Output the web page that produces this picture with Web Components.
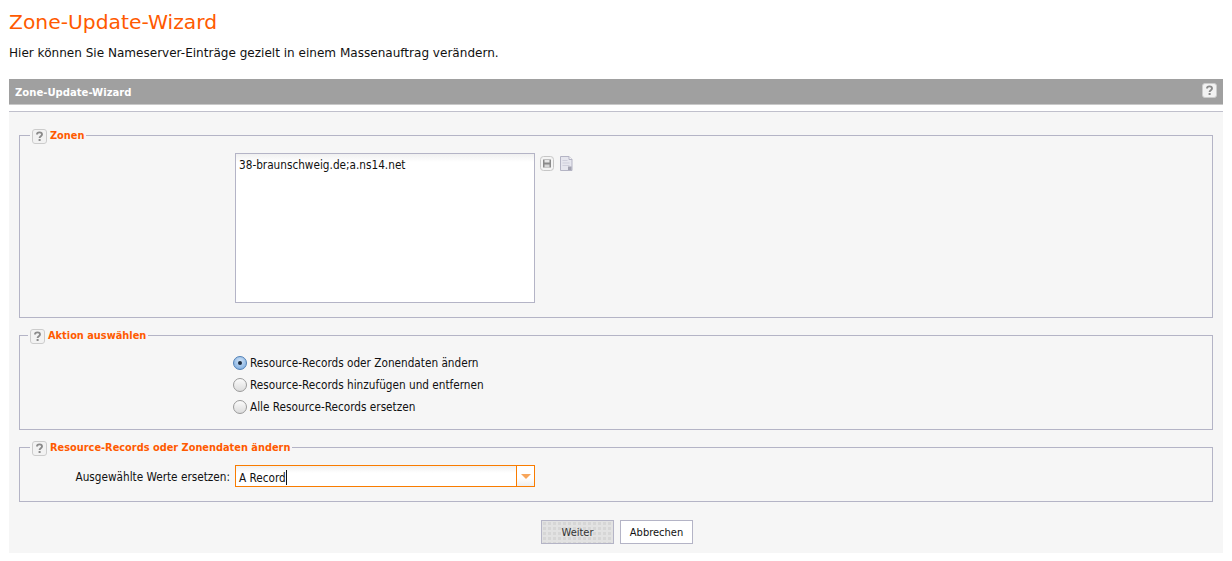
<!DOCTYPE html>
<html lang="de">
<head>
<meta charset="utf-8">
<title>Zone-Update-Wizard</title>
<style>
  html, body { margin: 0; background: #fff; }
  body { padding: 0 9px; font-family: "DejaVu Sans Condensed", "DejaVu Sans", sans-serif; font-size: 11.7px; color: #111; }
</style>
</head>
<body>
<wizard-page>
  <wizard-panel heading="Zone-Update-Wizard">
    <wizard-group heading="Zonen" style="height:183px;margin-top:23px">
      <form-row>
        <zone-text>38-braunschweig.de;a.ns14.net</zone-text>
      </form-row>
    </wizard-group>
    <wizard-group heading="Aktion auswählen" shift="-2" style="height:95px;margin-top:17px">
      <form-row style="padding-top:16px">
        <radio-option checked>Resource-Records oder Zonendaten ändern</radio-option>
        <radio-option>Resource-Records hinzufügen und entfernen</radio-option>
        <radio-option>Alle Resource-Records ersetzen</radio-option>
      </form-row>
    </wizard-group>
    <wizard-group heading="Resource-Records oder Zonendaten ändern" style="height:55px;margin-top:17px">
      <form-row label="Ausgewählte Werte ersetzen:" style="padding-top:17px">
        <combo-box value="A Record"></combo-box>
      </form-row>
    </wizard-group>
    <button-bar>
      <wizard-button disabled>Weiter</wizard-button>
      <wizard-button>Abbrechen</wizard-button>
    </button-bar>
  </wizard-panel>
</wizard-page>

<script>
// little grey question mark box, used in the panel bar and the legends
class HelpIcon extends HTMLElement {
  constructor() {
    super();
    this.attachShadow({ mode: 'open' });
  }
  connectedCallback() {
    this.shadowRoot.innerHTML = `
      <style>
        :host { display: inline-block; width: 15px; height: 15px; }
        svg { display: block; }
      </style>
      <svg width="15" height="15" viewBox="0 0 15 15" aria-hidden="true">
        <rect x=".5" y=".5" width="14" height="14" rx="2.5" fill="#f2f2f2" stroke="#cccccc"/>
        <path d="M5 5.6C5 4.2 6.1 3.4 7.5 3.4S10 4.3 10 5.5C10 7.2 7.6 7.2 7.6 9" fill="none" stroke="#8a8a8a" stroke-width="1.9"/>
        <rect x="6.6" y="10" width="2" height="2" fill="#8a8a8a"/>
      </svg>`;
  }
}

class WizardPage extends HTMLElement {
  constructor() {
    super();
    this.attachShadow({ mode: 'open' });
  }
  connectedCallback() {
    this.shadowRoot.innerHTML = `
      <style>
        :host { display: block; }
        h1 {
          margin: 0;
          padding-top: 10px;
          font: normal 20.3px/24px "DejaVu Sans", sans-serif;
          color: #ff5a00;
        }
        p {
          margin: 0 0 18px;
          padding-top: 11px;
          font: 12.05px/16px "DejaVu Sans", sans-serif;
          color: #111;
        }
      </style>
      <h1>Zone-Update-Wizard</h1>
      <p>Hier können Sie Nameserver-Einträge gezielt in einem Massenauftrag verändern.</p>
      <slot></slot>`;
  }
}

class WizardPanel extends HTMLElement {
  constructor() {
    super();
    this.attachShadow({ mode: 'open' });
  }
  connectedCallback() {
    this.shadowRoot.innerHTML = `
      <style>
        :host { display: block; }
        .bar {
          display: flex;
          align-items: center;
          justify-content: space-between;
          box-sizing: border-box;
          height: 25px;
          padding: 1px 6px 0;
          background: #a0a0a0;
          color: #fff;
          font: bold 11.2px "DejaVu Sans Condensed", sans-serif;
        }
        help-icon { margin-top: -4px; }
        .gap { box-sizing: border-box; height: 8px; border-top: 1px solid #c9c9c9; border-bottom: 1px solid #c0c0cc; }
        .body { background: #f6f6f6; padding: 0 10px; height: 441px; box-sizing: border-box; overflow: hidden; }
      </style>
      <div class="bar"><span>${this.getAttribute('heading')}</span><help-icon></help-icon></div>
      <div class="gap"></div>
      <div class="body"><slot></slot></div>`;
  }
}

class WizardGroup extends HTMLElement {
  constructor() {
    super();
    this.attachShadow({ mode: 'open' });
  }
  connectedCallback() {
    const shift = 12 + Number(this.getAttribute('shift') || 0);
    this.shadowRoot.innerHTML = `
      <style>
        :host { display: block; box-sizing: border-box; position: relative; border: 1px solid #b4b4c6; }
        .legend {
          position: absolute;
          top: -8px;
          left: ${shift - 2}px;
          display: flex;
          align-items: center;
          gap: 3px;
          padding: 0 2px;
          background: #f6f6f6;
          color: #ff5a00;
          font: bold 10.9px/16px "DejaVu Sans Condensed", sans-serif;
        }
      </style>
      <div class="legend"><help-icon></help-icon><span>${this.getAttribute('heading')}</span></div>
      <slot></slot>`;
  }
}

// label column on the left, the controls start at the same x in every group
class FormRow extends HTMLElement {
  constructor() {
    super();
    this.attachShadow({ mode: 'open' });
  }
  connectedCallback() {
    const label = this.getAttribute('label') || '';
    this.shadowRoot.innerHTML = `
      <style>
        :host { display: grid; grid-template-columns: 215px 1fr; }
        .label { text-align: right; padding-right: 5px; line-height: 24px; white-space: nowrap; }
        .controls { display: flex; flex-direction: column; }
      </style>
      <div class="label">${label}</div>
      <div class="controls"><slot></slot></div>`;
  }
}

class ZoneText extends HTMLElement {
  constructor() {
    super();
    this.attachShadow({ mode: 'open' });
  }
  connectedCallback() {
    this.shadowRoot.innerHTML = `
      <style>
        :host { display: flex; gap: 5px; margin-top: 17px; align-items: flex-start; }
        .box {
          box-sizing: border-box;
          width: 300px;
          height: 150px;
          padding: 3px 3px;
          border: 1px solid #b4b4c6;
          background: linear-gradient(#f0f0f0, #fff 8px);
          line-height: 16px;
        }
        .tools { display: flex; gap: 6px; margin-top: 3px; }
        svg { display: block; }
      </style>
      <div class="box"><slot></slot></div>
      <div class="tools">
        <svg width="14" height="15" viewBox="0 0 14 15" aria-hidden="true">
          <rect x=".5" y=".5" width="13" height="14" rx="3" fill="#f4f4f4" stroke="#c6c6c6"/>
          <path d="M3 3.5h8v8H3z" fill="#8a8a8a"/>
          <rect x="4.5" y="4" width="5" height="2.5" fill="#e6e6e6"/>
          <rect x="4.5" y="8.5" width="5" height="3" fill="#d6d6d6"/>
        </svg>
        <svg width="13" height="16" viewBox="0 0 13 16" aria-hidden="true">
          <path d="M.5 .5h8.5l3 3v11H.5z" fill="#e6e6ee" stroke="#b4b4c4"/>
          <path d="M9 .5v3h3" fill="#f6f6f6" stroke="#b4b4c4"/>
          <path d="M2.5 4.5h5M2.5 7h7M2.5 9.5h7" stroke="#cfcfdb"/>
          <rect x="8" y="10.5" width="3.5" height="3.5" fill="#a2a2b0"/>
        </svg>
      </div>`;
  }
}

class RadioOption extends HTMLElement {
  constructor() {
    super();
    this.attachShadow({ mode: 'open' });
  }
  connectedCallback() {
    const on = this.hasAttribute('checked');
    this.shadowRoot.innerHTML = `
      <style>
        :host { display: flex; align-items: center; gap: 3px; height: 22px; margin-left: -2px; white-space: nowrap; }
        .dot {
          box-sizing: border-box;
          display: grid;
          place-items: center;
          width: 14px;
          height: 14px;
          border-radius: 50%;
          border: 1px solid ${on ? '#4f7fb5' : '#9a9a9a'};
          background: ${on ? 'radial-gradient(circle at 50% 35%, #cfe2f6, #74a6dc)' : 'linear-gradient(#fbfbfb, #dcdcdc)'};
        }
        .dot i { width: 4px; height: 4px; border-radius: 50%; background: #1c2c40; }
      </style>
      <span class="dot">${on ? '<i></i>' : ''}</span>
      <span><slot></slot></span>`;
  }
}

class ComboBox extends HTMLElement {
  constructor() {
    super();
    this.attachShadow({ mode: 'open' });
  }
  connectedCallback() {
    this.shadowRoot.innerHTML = `
      <style>
        :host {
          display: flex;
          box-sizing: border-box;
          width: 300px;
          height: 22px;
          border: 1px solid #f97c00;
          background: linear-gradient(#f0f0f0, #fff 7px);
        }
        .value { flex: 1; padding-left: 3px; line-height: 24px; }
        .value b { display: inline-block; width: 1px; height: 15px; background: #111; vertical-align: -3px; }
        .arrow {
          display: grid;
          place-items: center;
          width: 17px;
          border-left: 1px solid #f97c00;
          background: linear-gradient(#fff 60%, #eee);
        }
        .arrow i { width: 0; height: 0; border: 5px solid transparent; border-top: 5px solid #f7a65c; border-bottom: 0; }
      </style>
      <div class="value">${this.getAttribute('value')}<b></b></div>
      <div class="arrow"><i></i></div>`;
  }
}

class ButtonBar extends HTMLElement {
  constructor() {
    super();
    this.attachShadow({ mode: 'open' });
  }
  connectedCallback() {
    this.shadowRoot.innerHTML = `
      <style>
        :host { display: flex; justify-content: center; gap: 6px; margin-top: 18px; padding-left: 2px; }
      </style>
      <slot></slot>`;
  }
}

class WizardButton extends HTMLElement {
  constructor() {
    super();
    this.attachShadow({ mode: 'open' });
  }
  connectedCallback() {
    const off = this.hasAttribute('disabled');
    this.shadowRoot.innerHTML = `
      <style>
        :host {
          display: grid;
          place-items: center;
          box-sizing: border-box;
          width: 73px;
          height: 24px;
          border: 1px solid #b4b4c6;
          background: ${off ? 'radial-gradient(circle, #d6d6d6 40%, transparent 45%) 0 0 / 5px 5px, #e2e2e2' : '#fff'};
          color: ${off ? '#333' : '#111'};
          font-size: 11px;
        }
      </style>
      <slot></slot>`;
  }
}

customElements.define('help-icon', HelpIcon);
customElements.define('wizard-page', WizardPage);
customElements.define('wizard-panel', WizardPanel);
customElements.define('wizard-group', WizardGroup);
customElements.define('form-row', FormRow);
customElements.define('zone-text', ZoneText);
customElements.define('radio-option', RadioOption);
customElements.define('combo-box', ComboBox);
customElements.define('button-bar', ButtonBar);
customElements.define('wizard-button', WizardButton);
</script>
</body>
</html>
